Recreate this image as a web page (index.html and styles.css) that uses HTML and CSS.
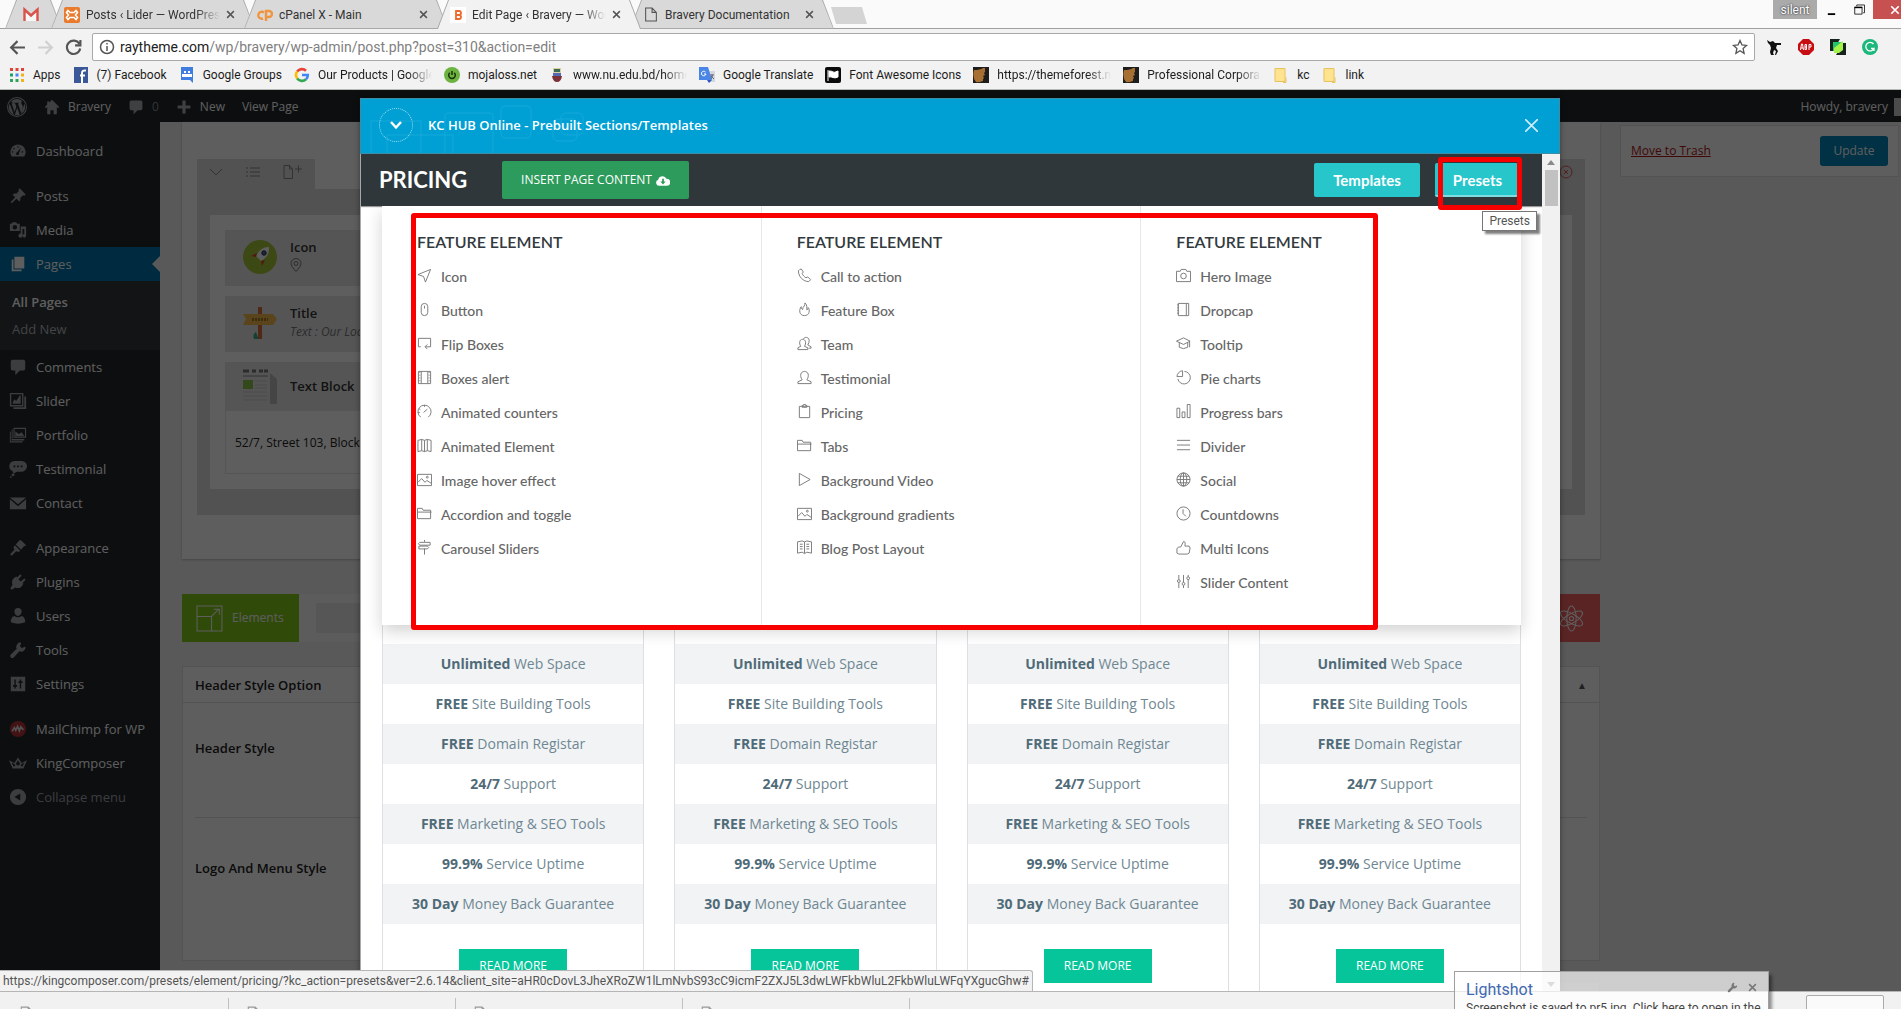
FILE: index.html
```html
<!DOCTYPE html>
<html lang="en">
<head>
<meta charset="utf-8">
<title>Edit Page ‹ Bravery — WordPress</title>
<link rel="stylesheet" href="styles.css">
</head>
<body>
<svg class="sprite" aria-hidden="true">
  <!-- dashboard menu -->
  <symbol id="dash" viewBox="0 0 20 20"><path fill-rule="evenodd" d="M3 16h14a8.500 8.500 0 1 0-14 0zM10 4.500l1 1-1 1-1-1zM5.500 6.500l1 1-1 1-1-1zM14.500 12l-1-1 1.500-1 1 1zM4 10l1 1-1 1-1-1zM13.500 6l-2.500 6.500a1.600 1.600 0 1 1-2-1z"/></symbol>
  <symbol id="pin" viewBox="0 0 20 20"><path d="M10.500 3l1.300-1.500 6.800 6.800-1.600 1.300-1.500-.4-3 3c.4 1.500 0 3-1 4l-3.200-3.200L3 18l-1.200-1 5-5.500L4 8.500c1-1 2.500-1.400 4-1l3-3z"/></symbol>
  <symbol id="media" viewBox="0 0 20 20"><path fill-rule="evenodd" d="M1 3h2l1-1.500h4L9 3h3v8H1zm5.500 1.500a2.500 2.500 0 1 0 0 5 2.500 2.500 0 0 0 0-5zM14 6h5v10.500a2 2 0 1 1-2-2V9h-2v7.500a2.300 2.300 0 1 1-2-2.500V6z"/></symbol>
  <symbol id="pages" viewBox="0 0 20 20"><path d="M6 2h11v13H6zM3 5h2v11h9v2H3z"/></symbol>
  <symbol id="comment" viewBox="0 0 20 20"><path d="M4 2h12q2 0 2 2v8q0 2-2 2h-4l-5 5v-5H4q-2 0-2-2V4q0-2 2-2z"/></symbol>
  <symbol id="slider" viewBox="0 0 20 20"><path fill-rule="evenodd" d="M1 1h15v15H1zm1.500 1.500v12h12v-12zM4 12l2-4 2 2 4-6 1-.5V13H4zM17 5h2v14H5v-2h12z"/></symbol>
  <symbol id="folio" viewBox="0 0 20 20"><path fill-rule="evenodd" d="M5 2h14v11H5zm1.200 1.200v8.600h11.600V3.200zM7 11V6l4 3 3-2 3 4zM3 4h1v10.500h13V16H3zM1 6.500h1V17h13v1.200H1z"/></symbol>
  <symbol id="testi" viewBox="0 0 20 20"><path fill-rule="evenodd" d="M6 1h8a5.500 5.500 0 0 1 0 12H9l-4 2-1-2.500A6 6 0 0 1 6 1zM5 6v2h2V6zm4 0v2h2V6zm4 0v2h2V6z"/><circle cx="4.500" cy="16.500" r="1.600"/><circle cx="2" cy="19" r="1"/></symbol>
  <symbol id="mail" viewBox="0 0 20 20"><path d="M1 4h18l-9 7.500zM1 5.800l9 7.700 9-7.700V17H1z"/></symbol>
  <symbol id="brush" viewBox="0 0 20 20"><path d="M12 1l2 1 5 5-3 1.500-2.500 3.500-6-6zM6.500 7l6 6-2 1.500-2.500-1L3 18.500 1.300 17 6 12 5 9.500z"/></symbol>
  <symbol id="plug" viewBox="0 0 20 20"><path d="M12.500 1.500L14 3l-3.500 4 2.500 2.500 4-3.500 1.500 1.500L15 11l1 1-2 3c-2 2-5 2-7 1l-4 2.500L1.500 17 4 13c-1-2-1-5 1-7l3-2 1 1z"/></symbol>
  <symbol id="user" viewBox="0 0 20 20"><path d="M10 1a4 4 0 0 1 4 4c0 2.500-1.800 5-4 5S6 7.500 6 5a4 4 0 0 1 4-4zM6 10q4 3 8 0c3 1 4 3 4 7q-8 3-16 0c0-4 1-6 4-7z"/></symbol>
  <symbol id="wrench" viewBox="0 0 20 20"><path d="M17 6.500L14.500 8 12 5.500 13.500 3 12.800 1.500A5 5 0 0 0 8.500 8.500L2 15q-1.500 2 0 3.200t3.200 0L11.500 11.500A5 5 0 0 0 18.500 7z"/></symbol>
  <symbol id="gears" viewBox="0 0 20 20"><path fill-rule="evenodd" d="M2 2h16v16H2zm4 3v6H4.500v2H6v2h1.500v-2H9v-2H7.500V5zm6 0v2h-1.500v2H12v6h1.500V9H15V7h-1.500V5z"/></symbol>
  <symbol id="crown" viewBox="0 0 20 20"><path fill-rule="evenodd" d="M0 7l6 3 4-6 4 6 6-3-4 9H4zm3 2.500L5 14l2-1-1-2zM10 7l-2.500 4L10 13l2.500-2zm7 2.500L14 11l-1 2 2 1z"/></symbol>
  <symbol id="collapse" viewBox="0 0 20 20"><path fill-rule="evenodd" d="M10 1a9 9 0 1 1 0 18 9 9 0 0 1 0-18zm2.500 5L6 10l6.500 4z"/></symbol>
  <symbol id="wp" viewBox="0 0 20 20"><path fill-rule="evenodd" d="M10 0a10 10 0 1 1 0 20 10 10 0 0 1 0-20zm0 1a9 9 0 1 0 0 18 9 9 0 0 0 0-18z"/><path d="M2.700 6.700L7 18A8 8 0 0 1 2.700 6.700zM4 4.700A8 8 0 0 1 15.300 4c-2 1-.8 3 .2 4.500.7 1.500.3 3-1.500 7.500L11 6.500l1-.2v-.6H7v.6l1.200.2 1.200 3.300L7.500 15 4.600 6.500l1-.2v-.8zM10.200 10.800l2.600 7a8 8 0 0 1-5 .2zM17.300 6.500A8 8 0 0 1 14 17l2.700-8z"/></symbol>
  <symbol id="home" viewBox="0 0 20 20"><path d="M10 1l9 9-1.500 1.500L16 10v9h-4v-5H8v5H4v-9l-1.500 1.500L1 10l3-3V3h2.500v1.500z"/></symbol>
  <symbol id="plus" viewBox="0 0 20 20"><path d="M8 2h4v6h6v4h-6v6H8v-6H2V8h6z"/></symbol>
  <!-- preset list, line icons -->
  <symbol id="i-plane" viewBox="0 0 16 16"><path d="M14.500 1.500L1 7l6 2 2 6z"/></symbol>
  <symbol id="i-mouse" viewBox="0 0 16 16"><rect x="4.500" y="1.500" width="7" height="13" rx="3.500"/><path d="M8 4v3"/></symbol>
  <symbol id="i-flip" viewBox="0 0 16 16"><path d="M4 11.500H1.500v-9h13v9H9M11 9l-2.500 2.500L11 14"/></symbol>
  <symbol id="i-film" viewBox="0 0 16 16"><path d="M1.500 1.500h13v13h-13zM4.500 2v12M11.500 2v12"/><path d="M3 2v12M13 2v12" stroke-dasharray="1 2"/></symbol>
  <symbol id="i-gauge" viewBox="0 0 16 16"><path d="M4 14a7 7 0 1 1 8 0M7 9l4-3.500M8 1v2M2 5l1.500 1M1 9h2"/></symbol>
  <symbol id="i-map" viewBox="0 0 16 16"><path d="M1 2.500l4-1 3 1 3-1 4 1v12l-4-1-3 1-3-1-4 1zM5 1.500v12M8 2.500v12M11 1.500v12"/></symbol>
  <symbol id="i-image" viewBox="0 0 16 16"><path d="M.5 2.500h15v12H.5zM1 11l4-4 3.500 4 2-2L15 12"/><circle cx="11" cy="5.500" r="1"/></symbol>
  <symbol id="i-folder" viewBox="0 0 16 16"><path d="M.5 13.500v-11h5l1 2h8v9zM.5 6.500h15"/></symbol>
  <symbol id="i-sign" viewBox="0 0 16 16"><path d="M8 0v2M8 9v6.500M3 2.500h11v3H3L1.500 4zM2 6.500h9l1.500 1.500L11 9.500H2z"/></symbol>
  <symbol id="i-phone" viewBox="0 0 16 16"><path d="M3 1.500L1.500 3c0 6 5 11.500 11 11.500l2-2-3-3-2 1C8 9.500 6 7.500 5.500 6l1.200-1.800L4.500 1z"/></symbol>
  <symbol id="i-fire" viewBox="0 0 16 16"><path d="M8.500 1c.5 3-2.500 4-2.500 7C4.500 7.500 4.500 6 4.500 5 2 8 2 14.500 8 14.500c5.500 0 6-6 4-8.500 0 1-.5 2-1.500 2.500C10.500 6 11 3 8.500 1z"/></symbol>
  <symbol id="i-team" viewBox="0 0 16 16"><path d="M1 14.500v-2l3-1.500c-2-3-1.500-7.500 2-7.500S10 8 8 11l3.500 1.500v2zM7 3c.5-2 5.500-2.500 6 1.500 0 2-.5 3.500-1.500 5l3.500 2v1.500h-2.500"/></symbol>
  <symbol id="i-person" viewBox="0 0 16 16"><path d="M1 14.500v-2l4.500-2C2.500 6 4 1.500 8 1.500s5.500 4.500 2.500 9l4.500 2v2z"/></symbol>
  <symbol id="i-clip" viewBox="0 0 16 16"><path d="M2.500 2.500h11v12h-11zM5.500 3.500V1.500h1.500v-1h2v1h1.500v2z"/></symbol>
  <symbol id="i-play" viewBox="0 0 16 16"><path d="M2.500 1.500v13L14 8z"/></symbol>
  <symbol id="i-book" viewBox="0 0 16 16"><path d="M.5 2l5-1L8 2l2.500-1 5 1v12l-5-1L8 14.500 5.500 13l-5 1zM8 2v12M3 4.500h3M3 7h3M3 9.500h3M10 4.500h3M10 7h3M10 9.500h3"/></symbol>
  <symbol id="i-camera" viewBox="0 0 16 16"><path d="M.5 3.500h4l1-2h5l1 2h4v11H.5z"/><circle cx="8" cy="8.500" r="3"/></symbol>
  <symbol id="i-note" viewBox="0 0 16 16"><path d="M2.500 1.500h11v13h-11zM11 2v12"/><path d="M2 2v12" stroke-dasharray="2 1"/></symbol>
  <symbol id="i-cap" viewBox="0 0 16 16"><path d="M8 2L.5 5.500 8 9l7-3.500zM3.500 7v5L8 13.500l4.500-1.500V7M14.500 6v6"/></symbol>
  <symbol id="i-pie" viewBox="0 0 16 16"><path d="M7 .8A6.500 6.500 0 0 0 1 7h6zM9 1.500A6.700 6.700 0 1 1 2 9.500"/></symbol>
  <symbol id="i-bars" viewBox="0 0 16 16"><path d="M1 4.500h3v10H1zM6.500 8.500h3v6h-3zM12 .5h3v14h-3z"/></symbol>
  <symbol id="i-lines" viewBox="0 0 16 16"><path d="M1 2.500h14M1 7.500h14M1 12.500h14"/></symbol>
  <symbol id="i-globe" viewBox="0 0 16 16"><circle cx="8" cy="8" r="7"/><ellipse cx="8" cy="8" rx="3.500" ry="7"/><path d="M8 1v14M1 8h14M2 4.500h12M2 11.500h12"/></symbol>
  <symbol id="i-clock" viewBox="0 0 16 16"><circle cx="8" cy="8" r="7"/><path d="M7.500 3.500V8l3 3"/></symbol>
  <symbol id="i-thumb" viewBox="0 0 16 16"><path d="M1 14v-5l2-1.500h2l3-6c2 0 2 2 1.500 5h4.500l1 2-1 5.500-2 1H3z"/></symbol>
  <symbol id="i-tune" viewBox="0 0 16 16"><path d="M3 1v5M3 9v6M8 1v8M8 12v3M13 1v2M13 6v9"/><circle cx="3" cy="7.500" r="1.500"/><circle cx="8" cy="10.500" r="1.500"/><circle cx="13" cy="4.500" r="1.500"/></symbol>
  <symbol id="x" viewBox="0 0 12 12"><path d="M1.500 1.500l9 9M10.500 1.500l-9 9"/></symbol>
  <symbol id="doc" viewBox="0 0 12 14"><path d="M1 1h6l4 4v8H1zM7 1v4h4"/></symbol>
  <symbol id="foldy" viewBox="0 0 14 16"><path d="M1 1.500h10v13H1z" fill="#ffe38e" stroke="#e5c35f"/><path d="M9 15.500h3v-5" fill="none" stroke="#e5c35f"/></symbol>
  <symbol id="comb" viewBox="0 0 16 16"><path d="M0 0h16v16H0z" fill="#1d1d1b"/><path d="M1 3q6 0 9-2h2v4l-1 1 1 2-2 1 1 2-1 1v2q-5 2-7 1Q-1 10 1 3z" fill="#a86f33"/></symbol>
</svg>

<header class="chrome">
  <div class="tabstrip">
    <nav class="tabs" aria-label="Browser tabs">
      <div class="tab tab-pinned"><svg class="fav" viewBox="0 0 16 16"><path d="M1.500 14V2.500L8 8.500l6.500-6V14" fill="#f7f7f7" stroke="#d9534a" stroke-width="2.400"/></svg></div>
      <div class="tab"><svg class="fav" viewBox="0 0 16 16"><rect width="16" height="16" rx="2" fill="#ea7a2c"/><path d="M4 3.500l2 2h4l2-2 1.500 2L11.500 8l2 2.500-1.500 2-2-2H6l-2 2-1.500-2 2-2.500-2-2.500z" fill="none" stroke="#fff" stroke-width="1.600"/></svg><span class="tab-title fade">Posts ‹ Lider — WordPress</span><button class="tab-x" aria-label="Close tab"><svg class="line"><use href="#x"/></svg></button></div>
      <div class="tab"><svg class="fav" viewBox="0 0 16 16"><path d="M7 5.500a3.500 3.500 0 1 0-1 6M9 14V4h3a3 3 0 0 1 0 6H10" fill="none" stroke="#f0953f" stroke-width="2.400"/></svg><span class="tab-title">cPanel X - Main</span><button class="tab-x" aria-label="Close tab"><svg class="line"><use href="#x"/></svg></button></div>
      <div class="tab tab-on"><svg class="fav" viewBox="0 0 16 16"><path d="M0 0h16v16H0z" fill="#fff"/><path d="M6 4h3q2 0 2 2t-2 2H6zM6 8h3q2 0 2 2t-2 2H6z" fill="none" stroke="#ee6a2b" stroke-width="1.800"/></svg><span class="tab-title fade">Edit Page ‹ Bravery — WordPress</span><button class="tab-x" aria-label="Close tab"><svg class="line"><use href="#x"/></svg></button></div>
      <div class="tab"><svg class="fav line"><use href="#doc"/></svg><span class="tab-title">Bravery Documentation</span><button class="tab-x" aria-label="Close tab"><svg class="line"><use href="#x"/></svg></button></div>
      <button class="newtab" aria-label="New tab"></button>
    </nav>
    <div class="winctl">
      <button class="profile">silent</button>
      <button aria-label="Minimize"><svg viewBox="0 0 12 12"><path d="M2 9.500h8v2H2z"/></svg></button>
      <button aria-label="Restore"><svg viewBox="0 0 12 12"><path d="M3 2V.5h8.500V9H10M.8 3h8v7.500h-8z" fill="none" stroke="#222"/><path d="M.5 2.500h8.500v1.500H.5z"/></svg></button>
      <button class="win-x" aria-label="Close window"><svg class="line"><use href="#x"/></svg></button>
    </div>
  </div>
  <div class="toolbar">
    <button class="nav-btn" aria-label="Back"><svg viewBox="0 0 16 16"><path d="M15 8H2M8 2L2 8l6 6"/></svg></button>
    <button class="nav-btn dim" aria-label="Forward"><svg viewBox="0 0 16 16"><path d="M1 8h13M8 2l6 6-6 6"/></svg></button>
    <button class="nav-btn" aria-label="Reload"><svg viewBox="0 0 16 16"><path d="M13.500 4.500A6.300 6.300 0 1 0 14.300 9M14.500 1v5h-5"/></svg></button>
    <form class="omnibox">
      <svg class="info" viewBox="0 0 16 16"><circle cx="8" cy="8" r="6.500"/><path d="M8 7v5M8 4v1.500"/></svg>
      <label for="url">raytheme.com</label><input id="url" type="text" value="/wp/bravery/wp-admin/post.php?post=310&amp;action=edit">
      <svg class="star" viewBox="0 0 16 16"><path d="M8 1.500l2 4.500 4.500.4-3.400 3.100 1 4.800L8 11.800l-4.100 2.500 1-4.800L1.500 6.400 6 6z"/></svg>
    </form>
    <div class="exts">
      <svg viewBox="0 0 16 16"><path d="M1 1l3 2 3-1 2 2 6 0v2h-4l-1 3 2 3-2 4H9l1-4-2-1-1 3 1 2H5l-1-3 1-4-1-3-2-2z" fill="#111"/></svg>
      <svg viewBox="0 0 16 16"><path d="M5 0h6l5 5v6l-5 5H5l-5-5V5z" fill="#c70d12"/><path d="M2.500 11l1-6h1l1 6M3 9h2M7 5.500h1.500v5H7zM7 8h2M11 11V5.500h2V8h-2" fill="none" stroke="#fff"/></svg>
      <svg viewBox="0 0 16 16"><path d="M0 0h10L3 12H0zM16 16H6l7-12h3z" fill="#16231c"/><path d="M3 3h9L4 12H3z" fill="#25c46a"/><path d="M13 2v9l-4 3H4V9z" fill="#a5f24b"/></svg>
      <svg viewBox="0 0 16 16"><circle cx="8" cy="8" r="8" fill="#1cb77a"/><path d="M11.500 5A4.300 4.300 0 1 0 12 9.500H9M12 9v3" fill="none" stroke="#fff" stroke-width="1.300"/></svg>
    </div>
  </div>
  <nav class="bookmarks" aria-label="Bookmarks">
    <a href="#"><svg viewBox="0 0 16 16"><path d="M1 1h3v3H1zM6.500 1h3v3h-3zM12 1h3v3h-3z" fill="#dc4437"/><path d="M1 6.500h3v3H1z" fill="#1aa15f"/><path d="M6.500 6.500h3v3h-3z" fill="#4587f4"/><path d="M12 6.500h3v3h-3zM12 12h3v3h-3z" fill="#f2b21a"/><path d="M1 12h3v3H1zM6.500 12h3v3h-3z" fill="#2fa35f"/></svg><span>Apps</span></a>
    <a href="#"><svg viewBox="0 0 16 16"><path d="M1 0h14v16H1z" fill="#3b5998"/><path d="M9 16V6q0-3 4-2.500M7 8.500h5" fill="none" stroke="#fff" stroke-width="2"/></svg><span>(7) Facebook</span></a>
    <a href="#"><svg viewBox="0 0 16 16"><path d="M2 0h12v16l-3-3H2z" fill="#3f7de0"/><path d="M3 10V7h10v3zM5 4h2v2H5zM9 4h2v2H9z" fill="#fff"/></svg><span>Google Groups</span></a>
    <a href="#"><svg viewBox="0 0 16 16" fill="none" stroke-width="2.600"><path d="M3.200 4.600A5.800 5.800 0 0 1 12 3.800" stroke="#ea4335"/><path d="M3.200 11.400a5.800 5.800 0 0 1 0-6.800" stroke="#fbbc05"/><path d="M12 12.200a5.800 5.800 0 0 1-8.800-.8" stroke="#34a853"/><path d="M8 8h5.800q0 2.800-1.800 4.200" stroke="#4285f4"/></svg><span class="fade clip">Our Products | Google</span></a>
    <a href="#"><svg viewBox="0 0 16 16"><circle cx="8" cy="8" r="8" fill="#6cb33f"/><path d="M5.800 5.800a3.300 3.300 0 1 0 4.400 0M8 4v4" fill="none" stroke="#17310b" stroke-width="1.500"/></svg><span>mojaloss.net</span></a>
    <a href="#"><svg viewBox="0 0 16 16"><path d="M4 1h8v7H4z" fill="#d9cfa0"/><path d="M5 2h6v3H5z" fill="#3b6b55"/><path d="M4 6h8v3H4z" fill="#5667b5"/><path d="M3 9h10q-1 6-5 6T3 9z" fill="#7c3138"/></svg><span class="fade clip">www.nu.edu.bd/home</span></a>
    <a href="#"><svg viewBox="0 0 16 16"><path d="M7 4h9v11H9z" fill="#d4d8de"/><path d="M0 0h9l4 13H0z" fill="#4a86e8"/><path d="M8 13h5l-3 3z" fill="#2a56c6"/><path d="M6.500 5A2.300 2.300 0 1 0 7 7H5" fill="none" stroke="#fff"/><path d="M11 8h4M13 7q1 3-1 5M12 9l3 3" stroke="#667" fill="none"/></svg><span>Google Translate</span></a>
    <a href="#"><svg viewBox="0 0 16 16"><rect width="16" height="16" rx="2" fill="#0b0b0b"/><path d="M3 3v11M4 4q3 0 4 1t5-1v6q-3 1.500-5 .5T4 10z" fill="#fff" stroke="#fff"/></svg><span>Font Awesome Icons</span></a>
    <a href="#"><svg><use href="#comb"/></svg><span class="fade clip">https://themeforest.n</span></a>
    <a href="#"><svg><use href="#comb"/></svg><span class="fade clip">Professional Corpora</span></a>
    <a href="#"><svg><use href="#foldy"/></svg><span>kc</span></a>
    <a href="#"><svg><use href="#foldy"/></svg><span>link</span></a>
  </nav>
</header>

<div class="viewport">
  <div class="wp">
    <div class="adminbar">
      <a href="#" aria-label="WordPress"><svg class="wplogo"><use href="#wp"/></svg></a>
      <a href="#"><svg><use href="#home"/></svg>Bravery</a>
      <a href="#" class="faint"><svg><use href="#comment"/></svg>0</a>
      <a href="#"><svg><use href="#plus"/></svg>New</a>
      <a href="#">View Page</a>
      <a href="#" class="howdy">Howdy, bravery <span class="avatar"></span></a>
    </div>
    <div class="wp-body">
      <nav class="side" aria-label="Admin menu">
        <a href="#"><svg><use href="#dash"/></svg>Dashboard</a>
        <hr>
        <a href="#"><svg><use href="#pin"/></svg>Posts</a>
        <a href="#"><svg><use href="#media"/></svg>Media</a>
        <a href="#" class="current"><svg><use href="#pages"/></svg>Pages</a>
        <div class="submenu"><a href="#" class="here">All Pages</a><a href="#">Add New</a></div>
        <a href="#"><svg><use href="#comment"/></svg>Comments</a>
        <a href="#"><svg><use href="#slider"/></svg>Slider</a>
        <a href="#"><svg><use href="#folio"/></svg>Portfolio</a>
        <a href="#"><svg><use href="#testi"/></svg>Testimonial</a>
        <a href="#"><svg><use href="#mail"/></svg>Contact</a>
        <hr>
        <a href="#"><svg><use href="#brush"/></svg>Appearance</a>
        <a href="#"><svg><use href="#plug"/></svg>Plugins</a>
        <a href="#"><svg><use href="#user"/></svg>Users</a>
        <a href="#"><svg><use href="#wrench"/></svg>Tools</a>
        <a href="#"><svg><use href="#gears"/></svg>Settings</a>
        <hr>
        <a href="#"><svg viewBox="0 0 20 20"><circle cx="10" cy="10" r="9" fill="#b33238"/><path d="M3.500 12.500l2.500-4 1.500 3 2-4.500 2 5 1.500-4.500 3 3.500" fill="none" stroke="#ddd" stroke-width="1.800"/></svg>MailChimp for WP</a>
        <a href="#"><svg><use href="#crown"/></svg>KingComposer</a>
        <button class="collapse"><svg><use href="#collapse"/></svg>Collapse menu</button>
      </nav>
      <main class="edit">
        <section class="builder">
          <div class="tools">
            <div class="tools-l">
              <svg viewBox="0 0 14 14"><path d="M1 4l6 6 6-6"/></svg>
              <svg viewBox="0 0 14 14"><path d="M4 3h10M4 7h10M4 11h10M0 3h2M0 7h2M0 11h2"/></svg>
              <svg class="wide" viewBox="0 0 20 14"><path d="M1 .5h5.500l3 3.500v9.500H1zM6.500.5V4h3M12 4h7M15.500 .5v7"/></svg>
            </div>
            <div class="tools-r"><svg viewBox="0 0 14 14"><circle cx="7" cy="7" r="6"/><path d="M5 5l4 4M9 5l-4 4"/></svg></div>
          </div>
          <div class="frame">
            <div class="canvas">
              <div class="row"><svg class="thumb" viewBox="0 0 36 36"><circle cx="18" cy="18" r="17" fill="#a4c639"/><path d="M27 8q-9 0-13 9l5 5q9-5 8-14z" fill="#fff"/><path d="M15 14l-6 3 5 1zM23 21l-3 6-1-5z" fill="#d9452c"/><circle cx="22" cy="14" r="2.200" fill="#4a6fa5" stroke="#223" /></svg><div><b>Icon</b><svg class="mappin" viewBox="0 0 12 14"><path d="M6 13.500Q1 8 1 5.500a5 5 0 0 1 10 0Q11 8 6 13.500z"/><circle cx="6" cy="5.500" r="2"/></svg></div></div>
              <div class="row"><svg class="thumb" viewBox="0 0 36 36"><path d="M16 2h4v32h-4z" fill="#d9703c"/><path d="M1 9h30l4 5-4 6H1l3-6z" fill="#f2b94b"/><path d="M12 34q-2-5 2-7l1 3 2 4z" fill="#3fae8c"/><path d="M10 14.500h16" stroke="#a77a2a" stroke-width="3" stroke-dasharray="2 1"/></svg><div><b>Title</b><i>Text : Our Location</i></div></div>
              <div class="row short"><svg class="thumb" viewBox="0 0 36 36"><path d="M1 3h6M10 3h4M17 3h4M22 3h4" stroke="#777" stroke-width="3"/><path d="M1 8h25" stroke="#888"/><path d="M1 12h10v9H1z" fill="#8bc34a"/><path d="M13 13h12M13 17h12M13 20h12M1 24h24M1 28h24M1 32h24" stroke="#ccc"/><path d="M28 5l7 6v25h-7z" fill="#bbb"/></svg><div><b>Text Block</b></div></div>
              <p class="preview">52/7, Street 103, Block D</p>
            </div>
          </div>
        </section>
        <div class="elements">
          <button class="el-btn"><svg viewBox="0 0 26 26"><path d="M1 1h24v24H1zM1 11h14v14M15 11l7-7M17 4h5.500v5.500"/></svg>Elements</button>
          <span class="el-slot"></span>
          <button class="el-red" aria-label="Presets hub"><svg viewBox="0 0 26 26"><ellipse cx="13" cy="13" rx="4.500" ry="12"/><ellipse cx="13" cy="13" rx="4.500" ry="12" transform="rotate(60 13 13)"/><ellipse cx="13" cy="13" rx="4.500" ry="12" transform="rotate(120 13 13)"/><circle cx="13" cy="13" r="2"/></svg></button>
        </div>
        <section class="meta">
          <h2>Header Style Option<span>▲</span></h2>
          <div class="meta-in">
            <h3>Header Style</h3>
            <h3>Logo And Menu Style</h3>
          </div>
        </section>
        <section class="meta"><h2></h2></section>
      </main>
      <aside class="publish">
        <div class="pub-box"><a href="#">Move to Trash</a><button>Update</button></div>
      </aside>
    </div>
  </div>
  <div class="shade"></div>

  <div class="modal" role="dialog" aria-labelledby="hub">
    <header class="hub-head">
      <svg class="deco" viewBox="0 0 230 54" aria-hidden="true"><rect x="10" y="22" width="50" height="60"/><rect x="26" y="36" width="66" height="50"/><rect x="84" y="14" width="48" height="60" rx="3"/><rect x="140" y="7" width="30" height="32" rx="4"/><rect x="200" y="14" width="22" height="22" rx="5"/><rect x="192" y="20" width="24" height="22" rx="5"/></svg>
      <button class="hub-toggle" aria-label="Toggle"><svg viewBox="0 0 14 14"><path d="M2 4l5 5.500L12 4"/></svg></button>
      <h1 id="hub">KC HUB Online - Prebuilt Sections/Templates</h1>
      <button class="hub-x" aria-label="Close"><svg viewBox="0 0 12 12"><path d="M0 0l12 12M12 0L0 12"/></svg></button>
    </header>
    <div class="hub-body">
      <div class="hub-page">
        <div class="hub-bar">
          <h2>PRICING</h2>
          <button class="insert">INSERT PAGE CONTENT <svg viewBox="0 0 16 12"><path fill-rule="evenodd" d="M3.500 12a3.500 3.500 0 0 1-1-6.800A5 5 0 0 1 12 4a4 4 0 0 1 .5 8zM7 4v3H5l3 3.500L11 7H9V4z"/></svg></button>
          <button class="teal templates">Templates</button>
          <button class="teal presets">Presets</button>
        </div>
        <div class="hub-scroll">
          <div class="prices">
            <article class="card"><ul><li><b>Unlimited</b> Web Space</li><li><b>FREE</b> Site Building Tools</li><li><b>FREE</b> Domain Registar</li><li><b>24/7</b> Support</li><li><b>FREE</b> Marketing &amp; SEO Tools</li><li><b>99.9%</b> Service Uptime</li><li><b>30 Day</b> Money Back Guarantee</li></ul><a href="#" class="more">READ MORE</a></article>
            <article class="card"><ul><li><b>Unlimited</b> Web Space</li><li><b>FREE</b> Site Building Tools</li><li><b>FREE</b> Domain Registar</li><li><b>24/7</b> Support</li><li><b>FREE</b> Marketing &amp; SEO Tools</li><li><b>99.9%</b> Service Uptime</li><li><b>30 Day</b> Money Back Guarantee</li></ul><a href="#" class="more">READ MORE</a></article>
            <article class="card"><ul><li><b>Unlimited</b> Web Space</li><li><b>FREE</b> Site Building Tools</li><li><b>FREE</b> Domain Registar</li><li><b>24/7</b> Support</li><li><b>FREE</b> Marketing &amp; SEO Tools</li><li><b>99.9%</b> Service Uptime</li><li><b>30 Day</b> Money Back Guarantee</li></ul><a href="#" class="more">READ MORE</a></article>
            <article class="card"><ul><li><b>Unlimited</b> Web Space</li><li><b>FREE</b> Site Building Tools</li><li><b>FREE</b> Domain Registar</li><li><b>24/7</b> Support</li><li><b>FREE</b> Marketing &amp; SEO Tools</li><li><b>99.9%</b> Service Uptime</li><li><b>30 Day</b> Money Back Guarantee</li></ul><a href="#" class="more">READ MORE</a></article>
          </div>
          <nav class="mega" aria-label="Presets">
            <div>
              <h3>FEATURE ELEMENT</h3>
              <a href="#"><svg><use href="#i-plane"/></svg>Icon</a>
              <a href="#"><svg><use href="#i-mouse"/></svg>Button</a>
              <a href="#"><svg><use href="#i-flip"/></svg>Flip Boxes</a>
              <a href="#"><svg><use href="#i-film"/></svg>Boxes alert</a>
              <a href="#"><svg><use href="#i-gauge"/></svg>Animated counters</a>
              <a href="#"><svg><use href="#i-map"/></svg>Animated Element</a>
              <a href="#"><svg><use href="#i-image"/></svg>Image hover effect</a>
              <a href="#"><svg><use href="#i-folder"/></svg>Accordion and toggle</a>
              <a href="#"><svg><use href="#i-sign"/></svg>Carousel Sliders</a>
            </div>
            <div>
              <h3>FEATURE ELEMENT</h3>
              <a href="#"><svg><use href="#i-phone"/></svg>Call to action</a>
              <a href="#"><svg><use href="#i-fire"/></svg>Feature Box</a>
              <a href="#"><svg><use href="#i-team"/></svg>Team</a>
              <a href="#"><svg><use href="#i-person"/></svg>Testimonial</a>
              <a href="#"><svg><use href="#i-clip"/></svg>Pricing</a>
              <a href="#"><svg><use href="#i-folder"/></svg>Tabs</a>
              <a href="#"><svg><use href="#i-play"/></svg>Background Video</a>
              <a href="#"><svg><use href="#i-image"/></svg>Background gradients</a>
              <a href="#"><svg><use href="#i-book"/></svg>Blog Post Layout</a>
            </div>
            <div>
              <h3>FEATURE ELEMENT</h3>
              <a href="#"><svg><use href="#i-camera"/></svg>Hero Image</a>
              <a href="#"><svg><use href="#i-note"/></svg>Dropcap</a>
              <a href="#"><svg><use href="#i-cap"/></svg>Tooltip</a>
              <a href="#"><svg><use href="#i-pie"/></svg>Pie charts</a>
              <a href="#"><svg><use href="#i-bars"/></svg>Progress bars</a>
              <a href="#"><svg><use href="#i-lines"/></svg>Divider</a>
              <a href="#"><svg><use href="#i-globe"/></svg>Social</a>
              <a href="#"><svg><use href="#i-clock"/></svg>Countdowns</a>
              <a href="#"><svg><use href="#i-thumb"/></svg>Multi Icons</a>
              <a href="#"><svg><use href="#i-tune"/></svg>Slider Content</a>
            </div>
          </nav>
        </div>
      </div>
      <div class="scrollbar"><span class="up"></span><span class="grip"></span><span class="down"></span></div>
    </div>
    <span class="mark mark-list"></span>
    <span class="mark mark-btn"></span>
    <span class="tip" role="tooltip">Presets</span>
  </div>

  <div class="status">https://kingcomposer.com/presets/element/pricing/?kc_action=presets&amp;ver=2.6.14&amp;client_site=aHR0cDovL3JheXRoZW1lLmNvbS93cC9icmF2ZXJ5L3dwLWFkbWluL2FkbWluLWFqYXgucGhw#</div>
</div>

<footer class="shelf">
  <div class="dl"><svg class="line"><use href="#doc"/></svg></div>
  <div class="dl"><svg class="line"><use href="#doc"/></svg></div>
  <div class="dl"><svg class="line"><use href="#doc"/></svg></div>
  <div class="dl"><svg class="line"><use href="#doc"/></svg></div>
  <button class="showall" aria-label="Show all downloads"></button>
</footer>

<div class="toast">
  <div class="toast-head"><strong>Lightshot</strong><svg class="wr"><use href="#wrench"/></svg><button aria-label="Dismiss"><svg class="line"><use href="#x"/></svg></button></div>
  <p>Screenshot is saved to pr5.jpg. Click here to open in the</p>
</div>
</body>
</html>
```
FILE: styles.css
```css
* { box-sizing: border-box; }
body {
  margin: 0;
  height: 100vh;
  overflow: hidden;
  position: relative;
  display: flex;
  flex-direction: column;
  font: 12px/16px "Open Sans", "Noto Sans", sans-serif;
  color: #222;
}
a { color: inherit; text-decoration: none; }
button { font: inherit; color: inherit; border: 0; padding: 0; background: none; }
h1, h2, h3, p, ul { margin: 0; padding: 0; }
ul { list-style: none; }
svg { flex: none; }
.sprite { position: absolute; width: 0; height: 0; }
.line { fill: none; stroke: #555; }
.fade { -webkit-mask-image: linear-gradient(90deg, #000 calc(100% - 24px), transparent); mask-image: linear-gradient(90deg, #000 calc(100% - 24px), transparent); }

/* browser frame */
.chrome { flex: none; background: #f2f2f2; border-bottom: 1px solid #b6bab6; font-family: Roboto, sans-serif; }
.tabstrip { display: flex; justify-content: space-between; height: 29px; background: #fafafa; border-bottom: 1px solid #a0a0a0; }
.tabs { display: flex; padding-left: 5px; }
.tab {
  position: relative;
  display: flex;
  align-items: center;
  gap: 6px;
  width: 204px;
  height: 29px;
  margin-right: -11px;
  padding: 0 20px 0 13px;
  background: #a8a8a8;
  clip-path: polygon(0 100%, 11px 0, calc(100% - 11px) 0, 100% 100%);
}
.tab::before {
  content: "";
  position: absolute;
  inset: 0 1px 1px;
  background: #d9d9d9;
  clip-path: polygon(0 100%, 11px 0, calc(100% - 11px) 0, 100% 100%);
}
.tab > * { position: relative; }
.tab-pinned { width: 57px; padding-left: 18px; }
.tab-on { z-index: 1; }
.tab-on::before { background: #f2f2f2; inset: 0 1px 0; }
.fav { width: 16px; height: 16px; }
.fav.line { height: 15px; }
.tab-title { flex: 1; overflow: hidden; white-space: nowrap; color: #333; }
.tab-x { width: 9px; height: 9px; display: flex; }
.tab-x svg { width: 9px; height: 9px; stroke-width: 2; }
.newtab { width: 36px; height: 17px; margin: 7px 0 0 8px; background: #d4d4d4; clip-path: polygon(0 0, 86% 0, 100% 100%, 14% 100%); }
.winctl { display: flex; height: 19px; }
.winctl button { width: 28px; display: flex; align-items: center; justify-content: center; }
.winctl svg { width: 11px; height: 12px; }
.winctl .profile { width: 44px; background: #aaa; color: #fff; text-shadow: 0 0 2px #000; }
.winctl .win-x { background: #c75050; padding-left: 16px; }
.winctl .win-x svg { stroke: #fff; stroke-width: 2; width: 10px; height: 10px; }

.toolbar { display: flex; align-items: center; padding: 4px 23px 0 9px; }
.nav-btn { width: 28px; height: 28px; display: flex; align-items: center; }
.nav-btn svg { width: 17px; height: 17px; fill: none; stroke: #555; stroke-width: 2; }
.nav-btn.dim svg { stroke: #d0d0d0; }
.omnibox { flex: 1; display: flex; align-items: center; height: 28px; margin: 0 11px 0 -1px; padding: 0 6px; border: 1px solid #a9a9a9; border-radius: 2px; background: #fff; font-size: 14px; line-height: 20px; }
.omnibox input { flex: 1; border: 0; padding: 0; outline: 0; background: none; font: inherit; color: #808080; }
.info { width: 16px; height: 16px; margin-right: 5px; fill: none; stroke: #555; stroke-width: 1.500; }
.star { width: 16px; height: 16px; fill: none; stroke: #555; stroke-width: 1.300; }
.exts { display: flex; gap: 16px; }
.exts svg { width: 16px; height: 16px; }

.bookmarks { display: flex; gap: 12px; height: 28px; padding-left: 9px; align-items: center; color: #1c1c1c; }
.bookmarks a { display: flex; gap: 8px; align-items: center; white-space: nowrap; }
.bookmarks svg { width: 16px; height: 16px; }
.clip { width: 114px; overflow: hidden; }

/* page behind the dialog */
.viewport { flex: 1; min-height: 0; position: relative; overflow: hidden; }
.wp { height: 100%; background: #f1f1f1; overflow: hidden; }
.adminbar { display: flex; align-items: center; gap: 17px; height: 32px; padding: 2px 0 0 7px; background: #23282d; color: #fff; overflow: hidden; }
.adminbar a { display: flex; align-items: center; gap: 8px; white-space: nowrap; }
.adminbar svg { width: 16px; height: 16px; fill: #a8adb2; }
.adminbar .wplogo { width: 20px; height: 20px; }
.adminbar .faint { color: #8a8f94; }
.adminbar .howdy { margin-left: auto; gap: 6px; }
.avatar { width: 7px; height: 18px; background: #ccc; }
.wp-body { display: flex; }
.side { flex: none; width: 160px; min-height: 100vh; padding-top: 12px; background: #23282d; color: #fff; font-size: 13px; }
.side > a, .collapse { display: flex; align-items: center; gap: 9px; height: 34px; padding-left: 9px; position: relative; white-space: nowrap; }
.side svg { width: 18px; height: 18px; fill: #a0a5aa; }
.side hr { height: 11px; margin: 0; border: 0; }
.side .current { background: #0073aa; }
.side .current svg { fill: #fff; }
.current::after { content: ""; position: absolute; right: 0; top: 9px; border: 8px solid transparent; border-left: 0; border-right-color: #f1f1f1; }
.submenu { padding: 8px 12px 7px; background: #32373c; color: #b4b9be; }
.submenu a { display: block; line-height: 27px; }
.submenu .here { color: #fff; font-weight: 600; }
.collapse { color: #a0a5aa; }

.edit { flex: 1; min-width: 0; padding-left: 22px; }
.builder { height: 437px; padding: 37px 15px 0; background: #fff; box-shadow: 0 1px 2px #bbb; }
.tools { display: flex; justify-content: space-between; }
.tools-l, .tools-r { display: flex; align-items: center; gap: 23px; height: 30px; padding: 0 12px 4px; background: #dedede; }
.tools-r { flex: 0 0 50%; justify-content: flex-end; }
.tools svg { width: 14px; height: 14px; fill: none; stroke: #888; }
.tools .wide { width: 20px; }
.tools-r svg { stroke: #d55; }
.frame { padding: 26px 13px; background: #dedede; }
.canvas { height: 274px; padding: 15px; background: #fff; }
.row { display: flex; gap: 12px; height: 56px; margin-bottom: 10px; padding: 9px 17px; background: #e7e7e7; font-size: 13px; line-height: 16px; }
.row.short { height: 48px; margin: 0; align-items: center; }
.row .thumb { width: 36px; height: 36px; }
.row b { display: block; font-weight: 600; color: #333; }
.row i { font-size: 12px; line-height: 22px; color: #777; }
.mappin { width: 12px; height: 14px; margin-top: 3px; fill: none; stroke: #777; }
.preview { height: 64px; padding: 24px 9px; border: 1px solid #e7e7e7; }
.elements { display: flex; align-items: center; margin: 35px 0 24px; background: #fafafa; }
.el-btn { display: flex; align-items: center; gap: 9px; width: 117px; height: 48px; padding-left: 14px; background: #82c81b; color: #fff; font-size: 12px; }
.el-btn svg, .el-red svg { width: 27px; height: 27px; fill: none; stroke: #fff; }
.el-slot { width: 160px; height: 30px; margin-left: 17px; background: #e9e9e9; }
.el-red { width: 58px; height: 48px; margin-left: auto; display: flex; align-items: center; justify-content: center; background: #f46262; }
.meta { margin-bottom: 20px; background: #fff; border: 1px solid #e2e2e2; }
.meta h2 { display: flex; justify-content: space-between; height: 36px; padding: 0 12px; border-bottom: 1px solid #ddd; font-size: 13px; line-height: 36px; font-weight: 600; }
.meta h2 span { font-size: 10px; color: #555; }
.meta-in { padding: 0 12px; }
.meta h3 { height: 115px; padding-top: 37px; border-bottom: 1px solid #e2e2e2; font-size: 13px; font-weight: 600; }
.meta h3 + h3 { height: 142px; padding-top: 42px; border: 0; }
.publish { flex: none; width: 301px; padding: 3px 2px 0 20px; }
.pub-box { display: flex; align-items: center; justify-content: space-between; height: 52px; padding: 0 10px; background: #fff; border: 1px solid #e2e2e2; font-size: 12px; }
.pub-box a { color: #b01818; text-decoration: underline; }
.pub-box button { width: 68px; height: 30px; border-radius: 3px; background: #0085ba; color: #fff; }
.shade { position: absolute; inset: 0; background: rgba(0, 0, 0, .63); }

/* hub dialog */
.modal { position: absolute; top: 8px; bottom: 0; left: 360px; right: 341px; display: flex; flex-direction: column; background: #fff; border-left: 1px solid #aaa; box-shadow: 0 0 6px rgba(0, 0, 0, .4); }
.hub-head { position: relative; flex: none; display: flex; align-items: center; height: 56px; padding: 0 21px 2px 18px; margin-left: -1px; background: #00a0d5; border: 1px solid #3d8da6; color: #fff; }
.deco { position: absolute; left: 0; top: 0; width: 230px; height: 54px; fill: none; stroke: #14a8da; }
.hub-toggle { position: relative; width: 34px; height: 34px; border: 1px dotted #9edcf0; border-radius: 50%; display: flex; align-items: center; justify-content: center; }
.hub-toggle svg { width: 14px; height: 14px; fill: none; stroke: #fff; stroke-width: 2.500; }
.hub-head h1 { position: relative; flex: 1; margin-left: 15px; font-size: 13px; line-height: 20px; font-weight: 600; }
.hub-x { display: flex; }
.hub-x svg { width: 13px; height: 13px; fill: none; stroke: #cdeef8; stroke-width: 1.500; }
.hub-body { flex: 1; min-height: 0; display: flex; }
.hub-page { flex: 1; min-width: 0; display: flex; flex-direction: column; }
.hub-bar { flex: none; display: flex; align-items: center; height: 52px; padding: 0 24px 0 18px; background: #30373a; color: #fff; box-shadow: 0 1px 1px #999; }
.hub-bar h2 { flex: 0 0 123px; font: 700 22px/28px Lato, sans-serif; }
.insert { display: flex; align-items: center; justify-content: center; gap: 4px; width: 187px; height: 38px; border-radius: 2px; background: #2c9b5b; }
.insert svg { width: 14px; height: 11px; fill: #fff; }
.teal { height: 34px; border-radius: 2px; background: #26c6cb; font: 700 15px/20px Lato, sans-serif; }
.templates { width: 106px; margin-left: auto; }
.presets { width: 83px; margin-left: 15px; padding: 2px 0 0 2px; border-bottom: 2px solid #7fdde2; }
.hub-scroll { flex: 1; min-height: 0; position: relative; padding: 0 21px; overflow: hidden; }
.prices { display: grid; grid-template-columns: repeat(4, 1fr); gap: 30px; }
.card { padding: 438px 0 40px; border: 1px solid #dde0e3; border-width: 0 1px; text-align: center; }
.card li { height: 40px; font-size: 14px; line-height: 40px; color: #6f8792; }
.card li:nth-child(odd) { background: #f1f3f5; }
.card li b { font-weight: 700; color: #506b78; }
.more { display: inline-block; width: 108px; margin-top: 25px; line-height: 34px; background: #06c59b; color: #fff; }
.mega { position: absolute; top: 0; left: 21px; right: 21px; display: grid; grid-template-columns: repeat(3, 1fr); background: #fff; box-shadow: 0 6px 16px rgba(0, 0, 0, .18); font: 500 14px/20px Lato, sans-serif; color: #666; }
.mega > div { padding: 24px 0 25px 35px; border-right: 1px solid #e8e8e8; }
.mega > div:last-child { border: 0; }
.mega h3 { margin-bottom: 6px; font-size: 16px; line-height: 24px; font-weight: 600; color: #333a3e; }
.mega a { display: flex; align-items: center; gap: 9px; height: 34px; }
.mega svg { width: 15px; height: 15px; fill: none; stroke: #777; margin-bottom: 3px; }
.scrollbar { flex: none; width: 18px; display: flex; flex-direction: column; align-items: center; background: #f1f1f1; }
.scrollbar span { border: 4px solid transparent; }
.scrollbar .up { margin-top: 2px; border-bottom: 5px solid #8a8a8a; }
.scrollbar .grip { width: 13px; height: 36px; margin-top: 5px; border: 0; background: #c1c1c1; }
.scrollbar .down { margin: auto 0 0; border-top: 5px solid #8a8a8a; }
.mark { position: absolute; border: 5px solid #f80000; border-radius: 3px; pointer-events: none; }
.mark-list { top: 115px; left: 50px; width: 967px; height: 417px; }
.mark-btn { top: 59px; right: 38px; width: 84px; height: 53px; }
.tip { position: absolute; top: 113px; right: 23px; padding: 0 6px; border: 1px solid #767676; background: #fff; color: #555; font: 12px/18px Roboto, sans-serif; box-shadow: 3px 3px 2px rgba(0, 0, 0, .5); }

.status { position: absolute; left: 0; bottom: 0; padding: 2px 3px; border: 1px solid #b5b5b5; border-left: 0; border-bottom: 0; border-radius: 0 3px 0 0; background: #f2f2f2; color: #555; white-space: nowrap; font-family: Roboto, sans-serif; }
.shelf { flex: none; display: flex; height: 18px; overflow: hidden; padding: 6px 17px 0 2px; background: #f1f1f1; border-top: 1px solid #b5b5b5; }
.dl { width: 227px; padding: 8px 0 0 18px; border-right: 1px solid #c0c0c0; }
.dl svg { width: 14px; height: 16px; stroke: #999; }
.showall { width: 78px; height: 30px; margin: -3px 0 0 auto; border: 1px solid #aaa; border-radius: 2px; background: #fafafa; }

.toast { position: absolute; right: 132px; bottom: 0; width: 315px; height: 38px; overflow: hidden; padding: 0 11px; border: 1px solid #a0a0a0; border-bottom: 0; background: linear-gradient(rgba(255, 255, 255, .7) 20px, rgba(252, 252, 252, .96) 20px); box-shadow: 3px 4px 3px rgba(0, 0, 0, .4); font-family: Roboto, sans-serif; }
.toast-head { display: flex; align-items: center; gap: 10px; padding-top: 7px; }
.toast strong { flex: 1; font-size: 16px; line-height: 22px; font-weight: 400; color: #4169b0; }
.toast .wr { width: 11px; height: 11px; fill: #777; margin-bottom: 6px; }
.toast button { margin-bottom: 6px; display: flex; }
.toast button svg { width: 9px; height: 9px; stroke: #777; stroke-width: 2; }
.toast p { white-space: nowrap; line-height: 14px; color: #444; }
```
